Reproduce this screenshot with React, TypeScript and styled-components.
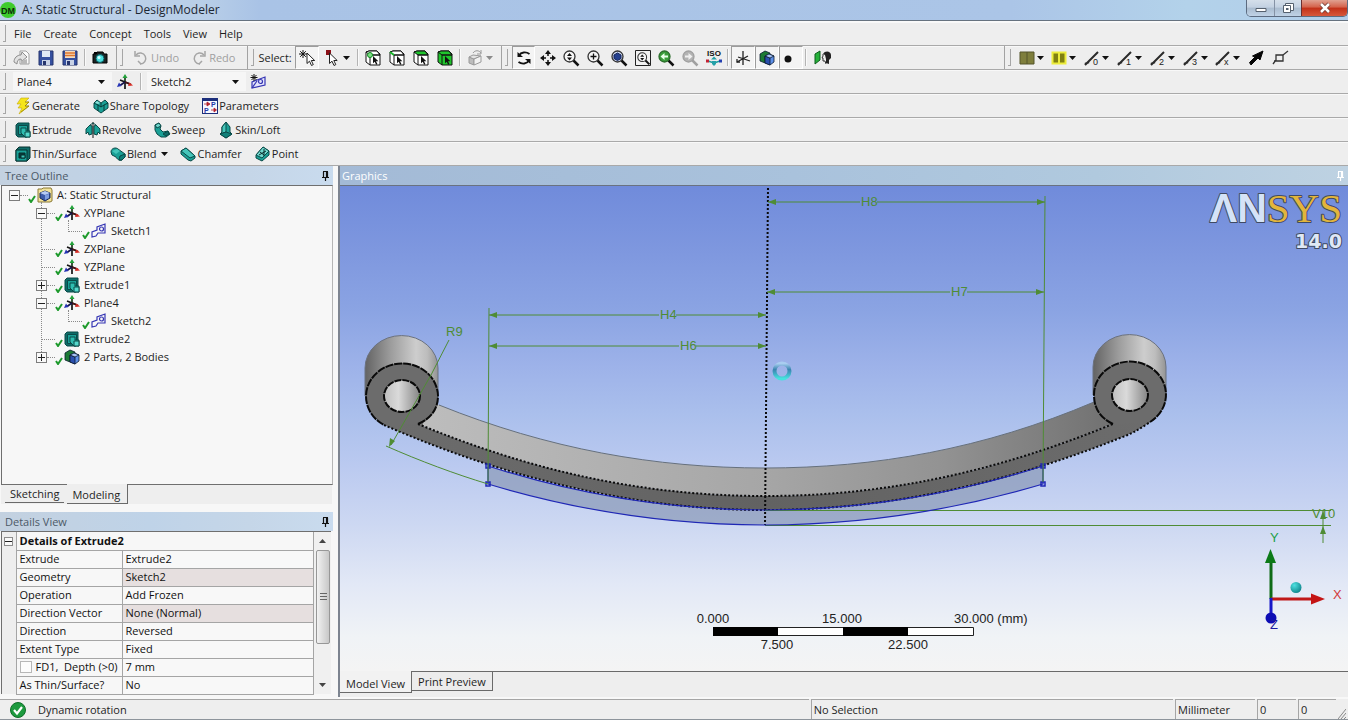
import React, { useState } from 'react';
import styled, { createGlobalStyle, css } from 'styled-components';

const GlobalStyle = createGlobalStyle`
  *, *::before, *::after { box-sizing: border-box; }
  body {
    margin: 0;
    background: #eeeeee;
    color: #1e1e1e;
    font: 11px/16px "Open Sans", "Noto Sans", sans-serif;
  }
  button, select, input { font: inherit; color: inherit; }
`;

/* ---------- window frame ---------- */

const Window = styled.div`
  display: flex;
  flex-direction: column;
  min-height: 100vh;
  min-width: 1200px;
`;

const TitleBar = styled.header`
  display: flex;
  align-items: flex-start;
  height: 22px;
  background: linear-gradient(90deg, #bcd0e8 0, #b9cfe8 200px, #a9c3e6 260px, #abc5e7 75%, #b3d2ea 88%, #b2cdea 100%);
  border-bottom: 1px solid #fafafa;
  box-shadow: inset 0 -1px 0 #66727f;
`;

const Title = styled.h1`
  flex: 1;
  margin: 2px 0 0 6px;
  font-size: 12px;
  line-height: 16px;
  font-weight: 400;
  color: #1c2733;
`;

const WindowControls = styled.div`
  display: flex;
  height: 17px;
  border: 1px solid #5c6b80;
  border-top: 0;
  border-radius: 0 0 5px 5px;
  overflow: hidden;
`;

const WindowButton = styled.button<{ $danger?: boolean }>`
  display: grid;
  place-items: center;
  width: ${p => (p.$danger ? 46 : 27)}px;
  padding: 0;
  border: 0;
  border-left: ${p => (p.$danger ? '1px solid #6b3030' : '1px solid #8592a5')};
  background: ${p => (p.$danger
    ? 'linear-gradient(#e0a191 0, #d4614a 45%, #c23018 50%, #d6583c 100%)'
    : 'linear-gradient(#d5dfea 0, #c3d1e2 45%, #aabccf 50%, #c0d2e6 100%)')};
  &:first-child { border-left: 0; }
`;

/* ---------- menus and toolbars ---------- */

const Bar = styled.div`
  display: flex;
  align-items: stretch;
  height: 24px;
  border-bottom: 1px solid #a9a9a9;
  box-shadow: inset 0 1px 0 #f8f8f8;
`;

const Grip = styled.span`
  flex: none;
  width: 3px;
  margin: 3px 4px 3px 3px;
  border: solid #a6a6a6;
  border-width: 0 1px 1px 0;
`;

const MenuItem = styled.button`
  padding: 0 6px;
  border: 0;
  background: none;
  &:first-of-type { margin-left: -2px; }
`;

const Group = styled.div<{ $end?: number }>`
  display: flex;
  align-items: stretch;
  padding-right: ${p => p.$end ?? 4}px;
  border-right: 1px solid #a2a2a2;
`;

const TrailingGroup = styled.div`
  display: flex;
  align-items: stretch;
  width: 344px;
  margin-left: auto;
  border-left: 1px solid #a2a2a2;
`;

const Cluster = styled.div<{ $width: number }>`
  display: flex;
  justify-content: space-between;
  width: ${p => p.$width}px;
`;

const Separator = styled.span`
  flex: none;
  width: 2px;
  margin: 3px 2px;
  border-left: 1px solid #b4b4b4;
  border-right: 1px solid #fafafa;
`;

const ToolButton = styled.button<{ $wide?: number; $pressed?: boolean }>`
  display: flex;
  align-items: center;
  justify-content: center;
  gap: 2px;
  width: ${p => p.$wide ?? 24}px;
  padding: 0;
  border: 1px solid transparent;
  background: none;
  ${p => p.$pressed && css`
    border-color: #9c9c9c #fff #fff #9c9c9c;
    background: #f4f4f4;
  `}
`;

const TextTool = styled.button<{ $gap?: number }>`
  display: flex;
  align-items: center;
  gap: ${p => p.$gap ?? 1}px;
  padding: 0 7px 0 6px;
  border: 0;
  background: none;
  white-space: nowrap;
  &:disabled { padding-right: 6px; color: #a0a0a0; }
`;

const MenuMark = styled.span`
  display: flex;
  margin: 0 -1px 0 4px;
`;

const FeatureTools = styled.div`
  display: flex;
  margin-left: -1px;
`;

const GroupLabel = styled.span`
  align-self: center;
  width: 37px;
  white-space: nowrap;
`;

const Picker = styled.label`
  position: relative;
  display: flex;
  align-items: center;
  width: 99px;
  margin: 2px 0 2px 3px;
  background: #f6f6f6;
`;

const PickerSelect = styled.select`
  width: 100%;
  height: 100%;
  padding: 0 16px 0 4px;
  border: 0;
  appearance: none;
  background: none;
`;

const PickerArrow = styled.span`
  position: absolute;
  right: 7px;
  display: flex;
  pointer-events: none;
`;

/* ---------- panels ---------- */

const Workspace = styled.main`
  display: flex;
  flex: 1;
  gap: 5px;
  background: #f7f7f7;
`;

const Sidebar = styled.aside`
  display: flex;
  flex-direction: column;
  flex: none;
  width: 333px;
`;

const PanelHeader = styled.div<{ $active?: boolean }>`
  display: flex;
  flex: none;
  align-items: center;
  justify-content: space-between;
  height: 19px;
  padding: 0 0 0 ${p => (p.$active ? 2 : 5)}px;
  color: ${p => (p.$active ? '#ffffff' : '#4c5967')};
  background: ${p => (p.$active
    ? 'linear-gradient(90deg, #a3bad6, #a9c2dc 45%, #b0c9de 75%, #bed2e2)'
    : 'linear-gradient(90deg, #c3d1e0, #bfd3e8 45%, #c5d6e8 75%, #c9dbee)')};
`;

const PanelTitle = styled.h2`
  margin: 0;
  font-size: 11px;
  font-weight: 400;
  line-height: 16px;
`;

const PinButton = styled.button`
  display: flex;
  padding: 0;
  border: 0;
  background: none;
`;

const TreeBox = styled.nav`
  flex: 1;
  margin-left: 1px;
  border: 1px solid #6f6f6f;
  border-right-color: #b5b5b5;
  background: #f7f7f7;
`;

const Branch = styled.ul<{ $line?: number }>`
  position: relative;
  margin: 0;
  padding: 0;
  list-style: none;
  ${p => p.$line !== undefined && css`
    &::before {
      content: "";
      position: absolute;
      top: -2px;
      bottom: 8px;
      left: ${p.$line}px;
      border-left: 1px dotted #8a8a8a;
    }
  `}
`;

const TreeRow = styled.div<{ $depth: number }>`
  display: flex;
  align-items: center;
  height: 18px;
  padding-left: ${p => 7 + p.$depth * 27}px;
`;

const Expander = styled.button`
  position: relative;
  flex: none;
  display: grid;
  place-items: center;
  width: 11px;
  height: 11px;
  padding: 0;
  border: 1px solid #7d7d7d;
  background: #f9f9f9;
`;

const Leader = styled.span<{ $leaf?: boolean }>`
  flex: none;
  width: ${p => (p.$leaf ? 14 : 8)}px;
  margin-left: ${p => (p.$leaf ? 5 : 0)}px;
  border-top: 1px dotted #8a8a8a;
`;

const CheckMark = styled.svg`
  flex: none;
  width: 8px;
  height: 8px;
  margin: 8px 1px 0 0;
`;

const TreeLabel = styled.span`
  margin-left: 4px;
  white-space: nowrap;
`;

const Tabs = styled.div`
  display: flex;
  align-items: flex-start;
  flex: none;
`;

const Tab = styled.button<{ $active?: boolean }>`
  position: relative;
  height: ${p => (p.$active ? 20 : 18)}px;
  margin-top: ${p => (p.$active ? -1 : 0)}px;
  padding: 0 ${p => (p.$active ? 7 : 5)}px 0 5px;
  border: solid #6a6a6a;
  border-width: 0 ${p => (p.$active ? 1 : 0)}px 1px 0;
  background: #eeeeee;
  line-height: ${p => (p.$active ? 22 : 18)}px;
`;

const SidebarTabs = styled(Tabs)`
  margin: 0 1px 8px 1px;
  height: 19px;
  padding-left: 4px;
  gap: 3px;
  background: #eeeeee;
`;

const Details = styled.div`
  display: flex;
  flex: none;
  height: 163px;
  margin: 0 2px 3px 1px;
  border-top: 1px solid #6f6f6f;
  border-left: 1px solid #6f6f6f;
  background: #f7f7f7;
`;

const DetailsTable = styled.table`
  flex: 1;
  table-layout: fixed;
  border-collapse: collapse;
  color: #111;
  height: 162px;
`;

const Gutter = styled.td`
  width: 14px;
  padding: 0;
  background: #eeeeee;
  vertical-align: top;
`;

const FoldButton = styled.button`
  display: grid;
  place-items: center;
  width: 9px;
  height: 9px;
  margin: 5px 0 0 2px;
  padding: 0;
  border: 1px solid #8c8c8c;
  background: #fafafa;
`;

const HeadCell = styled.th`
  height: 18px;
  padding: 0 3px;
  border: 1px solid #a5a5a5;
  border-top: 0;
  text-align: left;
  font-weight: 700;
`;

const NameCell = styled.th`
  width: 106px;
  height: 18px;
  padding: 0 0 0 3px;
  border: 1px solid #a5a5a5;
  text-align: left;
  font-weight: 400;
  white-space: pre;
  line-height: 16px;
`;

const ValueCell = styled.td<{ $readonly?: boolean }>`
  padding: 0 3px;
  border: 1px solid #a5a5a5;
  background: ${p => (p.$readonly ? '#e6dfdf' : '#f8f8f8')};
`;

const FlagLabel = styled.label`
  display: flex;
  align-items: center;
  gap: 4px;
`;

const FlagBox = styled.input`
  width: 12px;
  height: 12px;
  margin: 0;
  appearance: none;
  border: 1px solid #b7b7b7;
  background: #fcfcfc;
`;

const ScrollTrack = styled.div`
  display: flex;
  flex-direction: column;
  width: 17px;
  background: #f0f0f0;
`;

const ScrollArrow = styled.button`
  display: grid;
  place-items: center;
  height: 18px;
  padding: 0;
  border: 0;
  background: none;
`;

const ScrollThumb = styled.div`
  display: grid;
  place-items: center;
  height: 94px;
  margin: 0 1px auto 2px;
  border: 1px solid #979797;
  border-radius: 2px;
  background: linear-gradient(90deg, #f2f2f2, #dcdcdc 50%, #c8c8c8);
`;

/* ---------- graphics ---------- */

const GraphicsPanel = styled.section`
  display: flex;
  flex: 1;
  flex-direction: column;
  min-width: 0;
  border-left: 2px solid #7d8490;
  background: #eeeeee;
`;

const Viewport = styled.div`
  position: relative;
  flex: 1;
  min-height: 400px;
  border-top: 1px solid #6a7280;
  background: linear-gradient(#708bdb 0, #7f98df 14%, #8ba4e3 26%, #9db2e9 37%, #aabfec 47%, #bbcaf0 58%, #cdd8f2 70%, #e2e8f6 82%, #f0f3f6 93%, #f4f4f4 100%);
`;

const Scene = styled.svg`
  position: absolute;
  inset: 0;
  width: 100%;
  height: 100%;
`;

const Brand = styled.svg`
  position: absolute;
  top: 0;
  right: 4px;
  width: 144px;
  height: 70px;
  overflow: visible;
`;

const Triad = styled.svg`
  position: absolute;
  right: 0;
  bottom: 36px;
  width: 98px;
  height: 110px;
`;

const ViewTabs = styled(Tabs)`
  height: 26px;
  box-shadow: inset 0 1px 0 #6a6a6a;
`;

const ViewTab = styled(Tab)`
  margin-top: 0;
  padding: 0 6px;
  background: ${p => (p.$active ? '#f2f2f2' : '#ececec')};
  height: ${p => (p.$active ? 22 : 20)}px;
  line-height: ${p => (p.$active ? 26 : 20)}px;
  border-width: ${p => (p.$active ? '0 1px 1px 0' : '1px 1px 1px 0')};
`;

/* ---------- status ---------- */

const StatusBar = styled.footer`
  display: flex;
  align-items: stretch;
  height: 23px;
  padding-right: 2px;
  gap: 2px;
  border-top: 2px solid #f8f8f8;
  border-bottom: 1px solid #8d949b;
`;

const StatusCell = styled.div<{ $width?: number; $grow?: number }>`
  display: flex;
  align-items: center;
  gap: 12px;
  flex: ${p => (p.$grow ? `${p.$grow} 1 0` : 'none')};
  width: ${p => (p.$width ? `${p.$width}px` : 'auto')};
  padding-left: 2px;
  border: solid #a5a5a5;
  border-width: 1px 0 0 1px;
  white-space: nowrap;
`;

const StatusMessage = styled(StatusCell)`
  padding-left: 10px;
  border-left: 0;
`;

const StatusIcon = styled.svg`
  width: 16px;
  height: 16px;
`;

const ResizeHandle = styled.svg`
  align-self: flex-end;
  width: 8px;
  height: 14px;
`;

/* ---------- icons ---------- */

const Glyph = styled.svg`
  flex: none;
  width: 16px;
  height: 16px;
  overflow: visible;
`;

const SmallArrow = styled.svg`
  flex: none;
  width: 7px;
  height: 4px;
`;

const Down = ({ color = '#111' }: { color?: string }) => (
  <SmallArrow viewBox="0 0 7 4"><path d="M0 0h7L3.500 4z" fill={color} /></SmallArrow>
);

type IconName =
  | 'new' | 'save' | 'saveAll' | 'camera' | 'undo' | 'redo' | 'select' | 'filter'
  | 'rotate' | 'pan' | 'iso' | 'axes' | 'bodies' | 'dot' | 'look'
  | 'olive' | 'yellow' | 'arrow' | 'corner' | 'plane' | 'newSketch' | 'sketch' | 'folder'
  | 'bolt' | 'share' | 'params' | 'extrude' | 'revolve' | 'sweep' | 'loft' | 'thin'
  | 'blend' | 'chamfer' | 'point' | 'extend';

const teal = '#1aa096';
const tealDark = '#0b4a48';

const cursorPath = 'M0 0v10.500l2.500-2.300 2 4.300 1.800-.9-2-4.100h3.400z';

const art: Record<IconName, React.ReactNode> = {
  new: (
    <g>
      <path d="M6 1h6l3 3v10H6z" fill="#fafafa" stroke="#a0a0a0" />
      <path d="M0 12c0-4 3-7 7-7l1-3 5 5-5 4-1-2c-3 0-4 2-4 5z" fill="#e2e2e2" stroke="#8d8d8d" />
      <path d="M7 11l6-2v5H7z" fill="#b9b9b9" />
    </g>
  ),
  save: (
    <g>
      <path d="M1 1h14v14H1z" fill="#3550a0" stroke="#26356d" />
      <path d="M4 1h8v6H4z" fill="#dfe8f5" /><path d="M4 10h8v5H4z" fill="#c9d3e6" />
      <path d="M5 11h3v4H5z" fill="#26356d" />
    </g>
  ),
  saveAll: (
    <g>
      <path d="M1 1h14v14H1z" fill="#3550a0" stroke="#26356d" />
      <path d="M3 1h10v7H3z" fill="#f3dcc0" /><path d="M3 3h10M3 5.500h10" stroke="#e0762c" strokeWidth="1.500" />
      <path d="M4 10h8v5H4z" fill="#c9d3e6" /><path d="M5 11h3v4H5z" fill="#26356d" />
    </g>
  ),
  camera: (
    <g>
      <path d="M1 4h3l1-2h6l1 2h3v9H1z" fill="#1b2323" stroke="#000" />
      <path d="M2 2h3v2H2z" fill="#000" />
      <circle cx="8" cy="8.500" r="4" fill="#4ce0e0" stroke="#0d5f63" />
      <circle cx="7" cy="7.500" r="1.500" fill="#d6ffff" />
    </g>
  ),
  undo: (
    <g fill="none" stroke="#a5a5a5" strokeWidth="1.500">
      <path d="M3 5A5.500 5.500 0 1 1 7 14" /><path d="M2 1v5h5M5 11l3 3" />
    </g>
  ),
  redo: (
    <g fill="none" stroke="#a5a5a5" strokeWidth="1.500">
      <path d="M13 5A5.500 5.500 0 1 0 9 14" /><path d="M14 1v5H9M11 11l-3 3" />
    </g>
  ),
  select: (
    <g>
      <path d="M4 0v8M0 4h8M1.200 1.200l5.600 5.600M6.800 1.200L1.200 6.800" stroke="#111" />
      <path transform="translate(8 3)" d={cursorPath} fill="#fff" stroke="#222" />
    </g>
  ),
  filter: (
    <g>
      <path d="M1 0h5v5H1z" fill="#8a0f16" />
      <path transform="translate(4.500 3)" d={cursorPath} fill="#fff" stroke="#222" />
    </g>
  ),
  rotate: (
    <g fill="none" stroke="#111" strokeWidth="1.800">
      <path d="M3 5.500C5 2 10 1.500 13.500 4" /><path d="M13 10.500C11 14 6 14.500 2.500 12" />
      <path d="M1.500 2v5H7z" fill="#111" stroke="none" /><path d="M14.500 14V9H9z" fill="#111" stroke="none" />
    </g>
  ),
  pan: (
    <g fill="#111">
      <path d="M8 0l3 4H5zM8 16l3-4H5zM0 8l4-3v6zM16 8l-4-3v6z" />
      <path d="M8 3v3M8 10v3M3 8h3M10 8h3" stroke="#111" strokeWidth="1.500" />
    </g>
  ),
  iso: (
    <g>
      <text x="8" y="6" textAnchor="middle" fontSize="8" fontWeight="700" fontFamily="Liberation Sans, sans-serif" fill="#111">ISO</text>
      <path d="M2 11l6 2 6-2" stroke="#1a9c9c" strokeWidth="1.500" fill="none" />
      <path d="M5 9.500h6l-3-3zM6 11h4v3l-2 2-2-2z" fill="#23a0a8" />
      <path d="M0 9.500h3v3H0z" fill="#c22233" /><path d="M13 9.500h3v3h-3z" fill="#233fb0" />
    </g>
  ),
  axes: (
    <g stroke="#222" strokeWidth="1.300" fill="none">
      <path d="M8 1v14M2 12l11-6M3 7l12 4" /><path d="M2 9v3h3" />
    </g>
  ),
  bodies: (
    <g stroke="#0b1b30" strokeWidth=".8">
      <path d="M1 4l5-3 5 2v7l-5 3-5-2z" fill="#1c7a34" />
      <path d="M6 6l4-2 5 2v6l-4 3-5-2z" fill="#5d8fe8" />
      <path d="M6 6l5 2v7l-5-2z" fill="#2a4fae" /><path d="M6 6l4-2 5 2-4 2z" fill="#a8c4f5" />
    </g>
  ),
  dot: <circle cx="5" cy="9" r="3.500" fill="#111" />,
  look: (
    <g>
      <path d="M0 4l5-3v9l-5 4z" fill="#25b03a" stroke="#0d5c1c" />
      <path d="M8 4c2-4 8-3 8 1v3l-2 2v4l-3-1V9l-1-4z" fill="#222" />
      <path d="M8 4v2L7 8h1v3h2l1 3" fill="none" stroke="#333" />
    </g>
  ),
  olive: <g><path d="M1 2h14v12H1z" fill="#7e7e3c" stroke="#54542a" /><path d="M8 2v12" stroke="#54542a" /></g>,
  yellow: <g><path d="M1.500 2.500h13v11h-13z" fill="#808010" stroke="#ecec3a" strokeWidth="2" /><path d="M8 2v12" stroke="#ecec3a" strokeWidth="2" /></g>,
  arrow: <path d="M15 1l-3 9-2-2-7 7-1.500-2.500L7 7 4.500 6z" fill="#050505" stroke="#050505" />,
  corner: <g fill="none" stroke="#333" strokeWidth="1.300"><path d="M1 14l3-4V5h7v6H2" /><path d="M11 5l5-4" /></g>,
  plane: (
    <g strokeWidth="1.700">
      <path d="M8 8V3" stroke="#1b3a1b" /><path d="M8 0l2.500 4h-5z" fill="#22a13a" />
      <path d="M8 8v7M3 6l10 4" stroke="#151515" />
      <path d="M8 8l6 2.500" stroke="#4a1515" /><path d="M16 11.500l-5 .5 1.500-3.500z" fill="#d92a22" />
      <path d="M8 8l-5 3.500" stroke="#15154a" /><path d="M0 13l2-4.500 2.500 3.500z" fill="#2433b5" />
    </g>
  ),
  sketch: (
    <g fill="none" stroke="#3636b4" strokeWidth="1.200">
      <path d="M1 14V9l5-2V4l8-3v9H7l-2 3z" /><circle cx="10.500" cy="6" r="2" />
    </g>
  ),
  newSketch: (
    <g fill="none" stroke="#3636b4" strokeWidth="1.200">
      <path d="M2 14V8l13-5v8z" fill="#e4e4fb" /><circle cx="10.500" cy="7.500" r="2" /><path d="M2 14l5-7" />
      <path d="M4 0v7M.5 3.500h7M1.500 1l5 5M6.500 1l-5 5" stroke="#111" strokeWidth="1" />
    </g>
  ),
  folder: (
    <g>
      <path d="M1 2h4l1-1h8l1 2v11l-2 1H1z" fill="#f1e29a" stroke="#8c7a35" />
      <path d="M3 6l5-2 5 2v5l-5 3-5-3z" fill="#3c5aa8" stroke="#182a5c" />
      <path d="M3 6l5-2 5 2-5 2z" fill="#b7cbf4" /><path d="M8 8v5l4-2V7z" fill="#7e9de0" />
    </g>
  ),
  bolt: (
    <g>
      <path d="M6 0h8l-4 4h4l-4 4h4L4 16l3-6H3l3-4H2z" fill="#f5e51b" stroke="#c4a80c" strokeWidth=".6" />
      <path d="M10 4h4l-4 4M10 8h4L6 14" fill="none" stroke="#8c7a0a" strokeWidth=".7" />
    </g>
  ),
  share: (
    <g stroke={tealDark} fill={teal}>
      <path d="M1 5l3-3 4 3 4-3 3 3v5l-7 5-7-5z" /><path d="M1 5l4 2v6M15 5l-4 2v6M8 5v4M5 7l3 2 3-2" fill="none" stroke="#073a38" />
      <path d="M2 5l2-2 3 2-2 1z" fill="#8fe0d8" stroke="none" />
    </g>
  ),
  params: (
    <g>
      <path d="M0 0h16v16H0z" fill="#1c2f7c" /><path d="M1 3h14v12H1z" fill="#f7f7ff" />
      <g fontSize="7" fontWeight="700" fontFamily="Liberation Sans, sans-serif" fill="#2339a8">
        <text x="9" y="9">P</text><text x="2" y="15">P</text>
      </g>
      <path d="M2 6h3M5 4l3 2-3 2zM9 12h3M12 10l2.500 2-2.500 2z" stroke="#b3202a" fill="#b3202a" strokeWidth=".8" />
    </g>
  ),
  extrude: (
    <g stroke={tealDark}>
      <path d="M1 3l2-2h11v11l-2 3H3l-2-2z" fill="#0f6c69" />
      <path d="M3.500 3.500h9v9h-9z" fill={teal} />
      <path d="M6 6h5v3h4v6h-5l-4-4z" fill="#2fbdb0" /><path d="M10 10h5v5h-5z" fill="#55d8cc" />
    </g>
  ),
  revolve: (
    <g stroke={tealDark} fill={teal}>
      <path d="M1 7l4-4 2 1v8l-3 1-1-3-2 2z" /><path d="M15 7l-4-4-2 1v8l3 1 1-3 2 2z" />
      <path d="M8 0v16" stroke="#111" /><path d="M5 3l3-2 3 2" fill="none" />
    </g>
  ),
  sweep: (
    <g stroke={tealDark}>
      <path d="M1 3l4-2 2 3-1 3 3 3 5-1 2 3-4 3H7l-4-3-2-4z" fill={teal} />
      <path d="M1 3l4-2 2 3-4 2z" fill="#6fd6cc" /><path d="M9 12l5-3 1 3-3 2z" fill="#0f6c69" />
    </g>
  ),
  loft: (
    <g stroke={tealDark}>
      <path d="M8 0l4 5v5l2 2-6 4-6-4 2-2V5z" fill={teal} />
      <path d="M8 0v10l-6 2 2-2V5z" fill="#46c7bb" /><path d="M2 12l6-2 6 2-6 4z" fill="#0f8079" />
    </g>
  ),
  thin: (
    <g stroke="#07302f">
      <path d="M1 4l3-3h11v11l-3 3H1z" fill="#0f6c69" /><path d="M1 4h11v11H1z" fill={teal} />
      <path d="M4 7h6v5H4z" fill="#0a3b3a" /><path d="M6 9h4v3H6z" fill="#3fc4b8" />
    </g>
  ),
  blend: (
    <g stroke={tealDark}>
      <path d="M1 6c0-4 5-5 7-3l7 5v3l-3 3c-3 1-5-1-6-3L2 9z" fill={teal} /><path d="M9 14l1-4 5-2v3l-3 3z" fill="#0f8079" />
      <path d="M2 5l5-2 3 2-4 3z" fill="#45c5ba" stroke="none" />
    </g>
  ),
  chamfer: (
    <g stroke={tealDark}>
      <path d="M1 5l5-3 9 8v2l-4 3-3-1-7-6z" fill={teal} /><path d="M1 5l5-3 9 8-5 2z" fill="#45c5ba" />
    </g>
  ),
  point: (
    <g stroke={tealDark}>
      <path d="M1 9l7-8 6 4v4l-7 6-6-3z" fill={teal} /><path d="M1 9l7-8 6 4-7 7z" fill="#72d8cf" />
      <path d="M5 6l4 3M9 3v7M4 9l7-4" stroke="#072c2b" />
    </g>
  ),
  extend: (
    <g fill="#bdbdbd" stroke="#9a9a9a">
      <path d="M1 7l5 2v6l-5-2z" /><path d="M1 7l4-2 8 1-7 3z" fill="#e4e4e4" />
      <path d="M6 9l7-3v6l-7 3z" fill="#f2f2f2" /><path d="M5 3c2-3 6-3 8 0M13 0v4h-4" fill="none" />
    </g>
  ),
};

const Icon = ({ name }: { name: IconName }) => <Glyph viewBox="0 0 16 16" aria-hidden>{art[name]}</Glyph>;

const CubeIcon = ({ kind }: { kind: 'vertex' | 'edge' | 'face' | 'body' }) => (
  <Glyph viewBox="0 0 16 16" aria-hidden>
    <g stroke="#111" strokeLinejoin="round">
      <path d="M1 2l3-1h8l3 3v11H5l-4-3z" fill={kind === 'body' ? '#1fc52c' : '#fff'} />
      <path d="M1 2l4 3h10l-3-4H4z" fill={kind === 'face' || kind === 'body' ? '#1fc52c' : '#fff'} />
      <path d="M5 5v10M5 5h10" />
    </g>
    {kind === 'vertex' && <circle cx="5" cy="5" r="2.500" fill="#7fe087" stroke="#0c8a1c" />}
    {kind === 'edge' && <path d="M1 2l4 3" stroke="#17b52a" strokeWidth="2" />}
    <path transform="translate(8 6) scale(.7)" d={cursorPath} fill="#111" />
  </Glyph>
);

const Lens = ({ kind }: { kind: 'zoom' | 'in' | 'fit' | 'box' | 'prev' | 'next' }) => {
  const ring = kind === 'prev' ? '#2c6d2c' : kind === 'next' ? '#a0a0a0' : '#333';
  const fill = kind === 'prev' ? '#3a9c3a' : kind === 'next' ? '#b3b3b3' : kind === 'fit' ? '#cfd9f0' : '#f6f6f6';
  return (
    <Glyph viewBox="0 0 16 16" aria-hidden>
      {kind === 'box' && <path d="M.5 .5h15v15H.5z" fill="#f2f2f2" stroke="#222" />}
      <g transform={kind === 'box' ? 'translate(2 2) scale(.8)' : undefined}>
        <path d="M10 10l5.500 5.500" stroke={kind === 'next' ? '#a0a0a0' : '#111'} strokeWidth="2.500" />
        <circle cx="6.500" cy="6.500" r="5.500" fill={fill} stroke={ring} strokeWidth="1.300" />
        {(kind === 'zoom' || kind === 'box') && <path d="M6.500 3l2.500 3H4zM6.500 10.500l2.500-3H4z" fill="#111" />}
        {kind === 'in' && <path d="M6.500 3.500v6M3.500 6.500h6" stroke="#111" strokeWidth="1.300" />}
        {kind === 'fit' && <path d="M3 5l3.500-2L10 5v3.500L6.500 10.500 3 8.500z" fill="#24408f" stroke="#14245a" />}
        {kind === 'prev' && <path d="M10 5.500H6.500V3L2.500 6.500l4 3.500V7.500H10z" fill="#e9ffe9" />}
        {kind === 'next' && <path d="M3 5.500h3.500V3l4 3.500-4 3.500V7.500H3z" fill="#efefef" />}
      </g>
    </Glyph>
  );
};

const EdgeIcon = ({ label }: { label: string }) => (
  <Glyph viewBox="0 0 16 16" aria-hidden>
    <path d="M1 15l3-3L14 2M1 14l4-2" stroke="#2b2b2b" strokeWidth="2" fill="none" />
    <text x="9" y="15" fontSize="9" fontFamily="Liberation Sans, sans-serif" fill="#222">{label}</text>
  </Glyph>
);

const Pin = ({ color }: { color: string }) => (
  <Glyph viewBox="0 0 16 16" aria-hidden>
    <path d="M6.500 4v5M10.500 4v5M9.500 4v5M5 9.500h7M8.500 10v3M6 3.500h5" stroke={color} strokeWidth="1.200" fill="none" />
  </Glyph>
);

const Fold = ({ open }: { open: boolean }) => (
  <svg width="7" height="7" viewBox="0 0 7 7" aria-hidden>
    <path d={open ? 'M0 3.500h7' : 'M0 3.500h7M3.500 0v7'} stroke="#222" />
  </svg>
);

/* ---------- tree ---------- */

interface TreeItem { label: string; icon: IconName; open?: boolean; children?: TreeItem[] }

const tree: TreeItem[] = [{
  label: 'A: Static Structural', icon: 'folder', open: true, children: [
    { label: 'XYPlane', icon: 'plane', open: true, children: [{ label: 'Sketch1', icon: 'sketch' }] },
    { label: 'ZXPlane', icon: 'plane' },
    { label: 'YZPlane', icon: 'plane' },
    { label: 'Extrude1', icon: 'extrude', open: false },
    { label: 'Plane4', icon: 'plane', open: true, children: [{ label: 'Sketch2', icon: 'sketch' }] },
    { label: 'Extrude2', icon: 'extrude' },
    { label: '2 Parts, 2 Bodies', icon: 'bodies', open: false },
  ],
}];

const TreeBranch = ({ items, depth }: { items: TreeItem[]; depth: number }) => (
  <Branch $line={depth ? 12 + depth * 27 : undefined}>
    {items.map(item => (
      <li key={item.label}>
        <TreeRow $depth={depth}>
          {item.open !== undefined && (
            <Expander aria-label={`Toggle ${item.label}`}><Fold open={item.open} /></Expander>
          )}
          <Leader $leaf={item.open === undefined} />
          <CheckMark viewBox="0 0 8 8"><path d="M1 4l2 3 4-6" fill="none" stroke="#1e9a2c" strokeWidth="2" /></CheckMark>
          <Icon name={item.icon} />
          <TreeLabel>{item.label}</TreeLabel>
        </TreeRow>
        {item.children && <TreeBranch items={item.children} depth={depth + 1} />}
      </li>
    ))}
  </Branch>
);

/* ---------- details ---------- */

const details: { name: string; value: string; readonly?: boolean; flag?: boolean }[] = [
  { name: 'Extrude', value: 'Extrude2' },
  { name: 'Geometry', value: 'Sketch2', readonly: true },
  { name: 'Operation', value: 'Add Frozen' },
  { name: 'Direction Vector', value: 'None (Normal)', readonly: true },
  { name: 'Direction', value: 'Reversed' },
  { name: 'Extent Type', value: 'Fixed' },
  { name: 'FD1,  Depth (>0)', value: '7 mm', flag: true },
  { name: 'As Thin/Surface?', value: 'No' },
];

/* ---------- model drawing ---------- */

const green = '#4f8c35';

const Dimension = ({ x1, x2, y, label, at }: { x1: number; x2: number; y: number; label: string; at: number }) => (
  <g>
    <path d={`M${x1} ${y}H${at - 1}M${at + 16} ${y}H${x2}`} stroke={green} />
    <path d={`M${x1} ${y}l8-3v6zM${x2} ${y}l-8-3v6z`} fill={green} />
    <text x={at} y={y + 4}>{label}</text>
  </g>
);

const Eye = ({ x, y, notch }: { x: number; y: number; notch: string }) => (
  <g>
    <path d={`M${x - 37} ${y}v-28a36 32 0 0 1 73 0v28z`} fill="url(#barrel)" stroke="#6b7280" />
    <path d={notch} fill="#6c6c6c" />
    <ellipse cx={x} cy={y} rx="36" ry="33" fill="#6c6c6c" />
    <ellipse cx={x} cy={y} rx="18" ry="16" fill="url(#bore)" stroke="#0a0a0a" strokeWidth="2" strokeDasharray="7 1" />
  </g>
);

const ModelScene = () => (
  <Scene viewBox="340 186 1008 485" role="img" aria-label="Leaf spring model">
    <defs>
      <linearGradient id="barrel">
        <stop offset="0" stopColor="#636363" /><stop offset=".35" stopColor="#9c9c9c" />
        <stop offset=".7" stopColor="#cdcdcd" /><stop offset=".85" stopColor="#bdbdbd" /><stop offset="1" stopColor="#949494" />
      </linearGradient>
      <linearGradient id="bore">
        <stop offset="0" stopColor="#bfbfbf" /><stop offset=".4" stopColor="#dadada" /><stop offset="1" stopColor="#858585" />
      </linearGradient>
      <linearGradient id="leaf">
        <stop offset="0" stopColor="#bdbdbd" /><stop offset=".5" stopColor="#a6a6a6" />
        <stop offset=".75" stopColor="#939393" /><stop offset="1" stopColor="#717171" />
      </linearGradient>
      <linearGradient id="body">
        <stop offset="0" stopColor="#6c6c6c" /><stop offset=".5" stopColor="#626262" /><stop offset="1" stopColor="#6c6c6c" />
      </linearGradient>
      <linearGradient id="busy" x2="0" y2="1">
        <stop offset="0" stopColor="#a9cdf0" /><stop offset=".4" stopColor="#3a86b0" />
        <stop offset=".6" stopColor="#3f9fc0" /><stop offset="1" stopColor="#46e2de" />
      </linearGradient>
      <radialGradient id="ball" cx=".35" cy=".3" r=".8">
        <stop offset="0" stopColor="#4fe0e0" /><stop offset="1" stopColor="#0b7f86" />
      </radialGradient>
    </defs>

    <path d="M432 402L439 405C548 449 655 468 765 468S984 449 1094 402L1113 424C1000 470 890 496 765 496S530 470 418 424z" fill="url(#leaf)" />
    <path d="M439 405C548 449 655 468 765 468S984 449 1094 402" fill="none" stroke="#66707c" />
    <path d="M488 466C575 494 665 510 765 510S955 494 1043 466V484C955 510 865 525 765 525S575 510 488 484z" fill="#8b9ab8" fillOpacity=".72" />
    <Eye x={402} y={396} notch="M384 424L402 410 424 421 418 436z" />
    <Eye x={1130} y={395} notch="M1148 423L1130 410 1108 421 1113 436z" />
    <path d="M384 425L418 424C530 470 640 496 765 496S1000 470 1113 424L1150 422C1140 429 1131 434 1120 438C1010 482 890 510 765 510S510 480 384 425z" fill="url(#body)" />

    <g fill="none" stroke="#0a0a0a" strokeWidth="2">
      <path d="M418 424C432 418 438 408 438 396A36 33 0 1 0 384 425" strokeDasharray="8 1" />
      <path d="M1113 424C1100 418 1094 408 1094 395A36 33 0 1 1 1150 422" strokeDasharray="8 1" />
      <g strokeDasharray="2 2">
        <path d="M418 424C530 470 640 496 765 496S1000 470 1113 424" />
        <path d="M384 425C510 480 640 510 765 510S1010 482 1120 438C1131 434 1140 429 1150 422" />
        <path d="M768 188L765 525" />
      </g>
    </g>

    <g fill="none" stroke={green}>
      <path d="M765 510.500H1331M765 525.500H1331M1323 511V543" />
    </g>

    <g fill="none" stroke="#1f27b5" strokeWidth="1.200">
      <path d="M488 466C575 494 665 510 765 510S955 494 1043 466" />
      <path d="M488 464V484C575 510 665 525 765 525S955 510 1043 484V464" />
      <path d="M486 464h4v4h-4zM486 482h4v4h-4zM1041 464h4v4h-4zM1041 482h4v4h-4z" strokeWidth="1.500" />
    </g>

    <g fill="none" stroke={green}>
      <path d="M489 308L488 482M1045 196L1043 482" />
      <path d="M449 340L431 375 391 445" /><path d="M386 446C420 461 455 474 488 484" />
    </g>
    <path d="M389 447l1-9 5 3zM1323 511l3 8h-6zM1323 526l3 8h-6z" fill={green} />

    <g fill={green} fontFamily="Liberation Sans, sans-serif" fontSize="13">
      <Dimension x1={768} x2={1045} y={202} label="H8" at={861} />
      <Dimension x1={767} x2={1044} y={292} label="H7" at={951} />
      <Dimension x1={489} x2={766} y={315} label="H4" at={660} />
      <Dimension x1={489} x2={766} y={346} label="H6" at={680} />
      <text x="446" y="336">R9</text>
      <text x="1312" y="518">V10</text>
    </g>

    <circle cx="782" cy="371" r="7.500" fill="none" stroke="url(#busy)" strokeWidth="4" />

    <g fill="#222" fontFamily="Liberation Sans, sans-serif" fontSize="13" textAnchor="middle">
      <path d="M713.500 627.500h260v8h-260z" fill="#fff" stroke="#222" />
      <path d="M713 627h65v9h-65zM843 627h65v9h-65z" fill="#000" />
      <text x="713" y="623">0.000</text><text x="842" y="623">15.000</text>
      <text x="777" y="649">7.500</text><text x="908" y="649">22.500</text>
      <text x="954" y="623" textAnchor="start">30.000 (mm)</text>
    </g>
  </Scene>
);

const BrandMark = () => (
  <Brand viewBox="0 0 144 70" role="img" aria-label="ANSYS 14.0">
    <g stroke="#3f4a63" strokeWidth="2" paintOrder="stroke" strokeLinejoin="round" textAnchor="end">
      <text x="142" y="36" fontSize="41" fill="#d5e3f7" fontFamily="Liberation Sans, sans-serif" fontWeight="700">
        ΛN<tspan fill="#e2b53c" fontFamily="Liberation Serif, serif" fontWeight="400">SYS</tspan>
      </text>
      <text x="142" y="62" fontSize="19" fill="#dfe8f5" fontFamily="DejaVu Sans, sans-serif" fontWeight="700">14.0</text>
    </g>
  </Brand>
);

const AxisTriad = () => (
  <Triad viewBox="1250 525 98 110" role="img" aria-label="Axis triad">
    <path d="M1271 599V562" stroke="#0f6b17" strokeWidth="3" />
    <path d="M1270.500 549l5.500 14h-11z" fill="#0c7a18" />
    <path d="M1271 599H1312" stroke="#c01818" strokeWidth="3" />
    <path d="M1325 599l-14-5.500v11z" fill="#c41414" />
    <path d="M1271 598V616" stroke="#1717c8" strokeWidth="3" />
    <circle cx="1271" cy="618" r="5.500" fill="#0d0db4" />
    <circle cx="1296" cy="587.500" r="5.500" fill="url(#ball)" />
    <g fontFamily="Liberation Sans, sans-serif" fontSize="13">
      <text x="1270" y="542" fill="#1ea04a">Y</text>
      <text x="1333" y="599" fill="#d23a3a">X</text>
      <text x="1270" y="629" fill="#1b1ba0">Z</text>
    </g>
  </Triad>
);

/* ---------- page ---------- */

const Tool = ({ icon, label, pressed, wide }: { icon: IconName; label: string; pressed?: boolean; wide?: number }) => (
  <ToolButton aria-label={label} $pressed={pressed} $wide={wide}><Icon name={icon} /></ToolButton>
);

const Feature = ({ icon, label, menu }: { icon: IconName; label: string; menu?: boolean }) => (
  <TextTool>
    <Icon name={icon} />{label}{menu && <MenuMark><Down /></MenuMark>}
  </TextTool>
);

const PlanePicker = ({ label, options }: { label: string; options: string[] }) => (
  <Picker>
    <PickerSelect aria-label={label} defaultValue={options[options.length - 1]}>
      {options.map(o => <option key={o}>{o}</option>)}
    </PickerSelect>
    <PickerArrow><Down /></PickerArrow>
  </Picker>
);

export default function App() {
  const [suppressed, setSuppressed] = useState(false);
  return (
    <Window>
      <GlobalStyle />
      <TitleBar>
        <svg width="16" height="20" viewBox="0 0 16 20" aria-hidden>
          <circle cx="8" cy="10" r="8" fill="#3ecb2c" />
          <text x="8" y="14" textAnchor="middle" fontFamily="Liberation Sans, sans-serif" fontSize="9" fontWeight="700" fill="#0b2a08">DM</text>
        </svg>
        <Title>A: Static Structural - DesignModeler</Title>
        <WindowControls>
          <WindowButton aria-label="Minimize">
            <svg width="14" height="12"><path d="M2 6.500h10v3H2z" fill="#fff" stroke="#55606e" /></svg>
          </WindowButton>
          <WindowButton aria-label="Restore">
            <svg width="14" height="12">
              <path d="M4.500 1.500h8v7h-8z" fill="#fff" stroke="#55606e" /><path d="M2.500 3.500h7v7h-7z" fill="#fff" stroke="#55606e" />
              <path d="M5 6h2.500v2H5z" fill="#55606e" />
            </svg>
          </WindowButton>
          <WindowButton aria-label="Close" $danger>
            <svg width="14" height="12">
              <path d="M3 2l8 8M11 2l-8 8" stroke="#6a3a34" strokeWidth="4" /><path d="M3 2l8 8M11 2l-8 8" stroke="#fff" strokeWidth="2.500" />
            </svg>
          </WindowButton>
        </WindowControls>
      </TitleBar>

      <Bar as="nav">
        <Grip />
        {['File', 'Create', 'Concept', 'Tools', 'View', 'Help'].map(m => <MenuItem key={m}>{m}</MenuItem>)}
      </Bar>

      <Bar>
        <Group>
          <Grip />
          <Tool icon="new" label="New" /><Tool icon="save" label="Save" /><Tool icon="saveAll" label="Export" />
          <Separator />
          <Tool icon="camera" label="Capture" />
        </Group>
        <Group $end={6}>
          <Grip />
          <TextTool disabled $gap={2}><Icon name="undo" />Undo</TextTool>
          <TextTool disabled $gap={2}><Icon name="redo" />Redo</TextTool>
        </Group>
        <Group>
          <Grip />
          <GroupLabel>Select:</GroupLabel>
          <Tool icon="select" label="New selection" pressed />
          <ToolButton aria-label="Select mode" $wide={36}><Icon name="filter" /><Down /></ToolButton>
          <Separator />
          <ToolButton aria-label="Vertices"><CubeIcon kind="vertex" /></ToolButton>
          <ToolButton aria-label="Edges"><CubeIcon kind="edge" /></ToolButton>
          <ToolButton aria-label="Faces"><CubeIcon kind="face" /></ToolButton>
          <ToolButton aria-label="Bodies"><CubeIcon kind="body" /></ToolButton>
          <Separator />
          <ToolButton aria-label="Extend selection" $wide={34}><Icon name="extend" /><Down color="#8a8a8a" /></ToolButton>
        </Group>
        <Grip />
        <Cluster $width={213}>
          <Tool icon="rotate" label="Rotate" pressed wide={23} />
          <Tool icon="pan" label="Pan" wide={23} />
          {(['zoom', 'in', 'fit', 'box', 'prev', 'next'] as const).map(k => (
            <ToolButton key={k} aria-label={`View ${k}`} $wide={23}><Lens kind={k} /></ToolButton>
          ))}
          <Tool icon="iso" label="Isometric view" wide={23} />
        </Cluster>
        <Separator />
        <Cluster $width={72}>
          <Tool icon="axes" label="Display plane" pressed />
          <Tool icon="bodies" label="Display model" pressed />
          <Tool icon="dot" label="Display points" pressed />
        </Cluster>
        <Separator />
        <Tool icon="look" label="Look at" wide={28} />
        <TrailingGroup>
          <Grip />
          <Cluster $width={229}>
            <ToolButton aria-label="Face colour" $wide={32}><Icon name="olive" /><Down /></ToolButton>
            <ToolButton aria-label="Highlight colour" $wide={32}><Icon name="yellow" /><Down /></ToolButton>
            {['0', '1', '2', '3', 'x'].map(n => (
              <ToolButton key={n} aria-label={`Edge joints ${n}`} $wide={32}><EdgeIcon label={n} /><Down /></ToolButton>
            ))}
          </Cluster>
          <Tool icon="arrow" label="Edge direction" />
          <Tool icon="corner" label="Display vertices" />
        </TrailingGroup>
      </Bar>

      <Bar>
        <Grip />
        <PlanePicker label="Active plane" options={['XYPlane', 'ZXPlane', 'YZPlane', 'Plane4']} />
        <Tool icon="plane" label="New plane" wide={26} />
        <Separator />
        <PlanePicker label="Active sketch" options={['None', 'Sketch2']} />
        <Tool icon="newSketch" label="New sketch" />
      </Bar>

      <Bar>
        <Grip />
        <FeatureTools>
          <Feature icon="bolt" label="Generate" /><Feature icon="share" label="Share Topology" /><Feature icon="params" label="Parameters" />
        </FeatureTools>
      </Bar>
      <Bar>
        <Grip />
        <FeatureTools>
          <Feature icon="extrude" label="Extrude" /><Feature icon="revolve" label="Revolve" />
          <Feature icon="sweep" label="Sweep" /><Feature icon="loft" label="Skin/Loft" />
        </FeatureTools>
      </Bar>
      <Bar>
        <Grip />
        <FeatureTools>
          <Feature icon="thin" label="Thin/Surface" /><Feature icon="blend" label="Blend" menu />
          <Feature icon="chamfer" label="Chamfer" /><Feature icon="point" label="Point" />
        </FeatureTools>
      </Bar>

      <Workspace>
        <Sidebar>
          <PanelHeader>
            <PanelTitle>Tree Outline</PanelTitle>
            <PinButton aria-label="Pin tree outline"><Pin color="#111" /></PinButton>
          </PanelHeader>
          <TreeBox aria-label="Tree outline"><TreeBranch items={tree} depth={0} /></TreeBox>
          <SidebarTabs>
            <Tab>Sketching</Tab>
            <Tab $active>Modeling</Tab>
          </SidebarTabs>
          <PanelHeader>
            <PanelTitle>Details View</PanelTitle>
            <PinButton aria-label="Pin details view"><Pin color="#111" /></PinButton>
          </PanelHeader>
          <Details>
            <DetailsTable>
              <colgroup><col width="14" /><col width="106" /><col /></colgroup>
              <tbody>
                <tr>
                  <Gutter rowSpan={9}><FoldButton aria-label="Collapse details"><Fold open /></FoldButton></Gutter>
                  <HeadCell colSpan={2}>Details of Extrude2</HeadCell>
                </tr>
                {details.map(d => (
                  <tr key={d.name}>
                    <NameCell scope="row">
                      {d.flag ? (
                        <FlagLabel>
                          <FlagBox type="checkbox" checked={suppressed} onChange={e => setSuppressed(e.target.checked)} />
                          {d.name}
                        </FlagLabel>
                      ) : d.name}
                    </NameCell>
                    <ValueCell $readonly={d.readonly}>{d.value}</ValueCell>
                  </tr>
                ))}
              </tbody>
            </DetailsTable>
            <ScrollTrack>
              <ScrollArrow aria-label="Scroll up"><svg width="7" height="4"><path d="M0 4h7L3.500 0z" fill="#444" /></svg></ScrollArrow>
              <ScrollThumb><svg width="7" height="8"><path d="M0 .5h7M0 3.500h7M0 6.500h7" stroke="#666" /></svg></ScrollThumb>
              <ScrollArrow aria-label="Scroll down"><Down color="#444" /></ScrollArrow>
            </ScrollTrack>
          </Details>
        </Sidebar>

        <GraphicsPanel>
          <PanelHeader $active>
            <PanelTitle>Graphics</PanelTitle>
            <PinButton aria-label="Pin graphics"><Pin color="#fff" /></PinButton>
          </PanelHeader>
          <Viewport>
            <ModelScene />
            <BrandMark />
            <AxisTriad />
          </Viewport>
          <ViewTabs>
            <ViewTab $active>Model View</ViewTab>
            <ViewTab>Print Preview</ViewTab>
          </ViewTabs>
        </GraphicsPanel>
      </Workspace>

      <StatusBar>
        <StatusMessage $grow={809}>
          <StatusIcon viewBox="0 0 16 16" aria-hidden>
            <circle cx="8" cy="8" r="7.500" fill="#1d9a3f" stroke="#0f6e29" />
            <path d="M4 8l3 3.500L12 5" fill="none" stroke="#fff" strokeWidth="2.200" />
          </StatusIcon>
          Dynamic rotation
        </StatusMessage>
        <StatusCell $grow={364}>No Selection</StatusCell>
        <StatusCell $width={80}>Millimeter</StatusCell>
        <StatusCell $width={39}>0</StatusCell>
        <StatusCell $width={38}>0</StatusCell>
        <ResizeHandle viewBox="0 0 8 14"><path d="M0 14L8 4M3 14L8 8M6 14l2-2" stroke="#888" /></ResizeHandle>
      </StatusBar>
    </Window>
  );
}
